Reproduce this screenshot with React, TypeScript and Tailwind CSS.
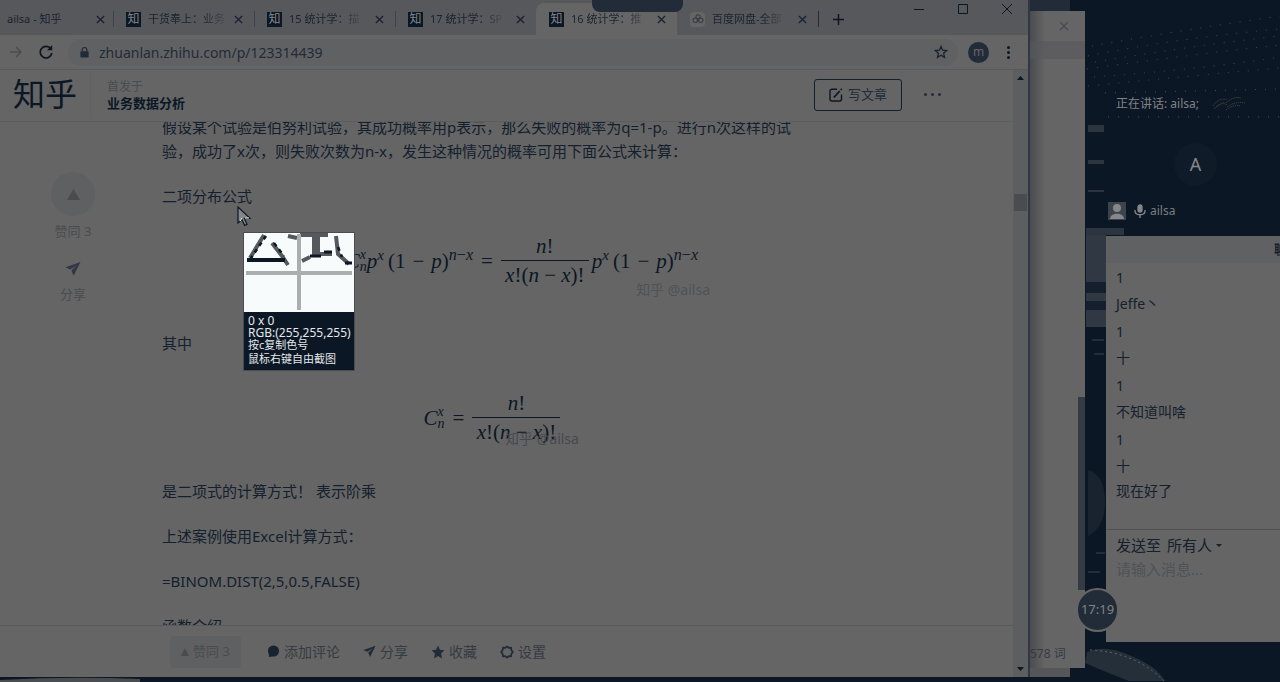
import React from "react";

const tabs = [
  { title: "干货奉上：业务", kind: "zhi", active: false },
  { title: "15 统计学：描", kind: "zhi", active: false },
  { title: "17 统计学：SP", kind: "zhi", active: false },
  { title: "16 统计学：推", kind: "zhi", active: true },
  { title: "百度网盘-全部", kind: "pan", active: false },
];

const messages = [
  ["1", "Jeffe丶"],
  ["1", "十"],
  ["1", "不知道叫啥"],
  ["1", "十"],
];

function Cross({ className }: { className: string }) {
  return (
    <svg viewBox="0 0 10 10" className={className} fill="none" stroke="currentColor" strokeWidth="1.5">
      <path d="M1 1l8 8M9 1l-8 8" />
    </svg>
  );
}

function Plane({ className }: { className: string }) {
  return (
    <svg viewBox="0 0 16 16" className={className} fill="currentColor">
      <path d="M15.5 1L.5 6.2l4.6 2.2L12 4.2 6.4 9.4l2.2 5.4z" />
    </svg>
  );
}

function Triangle({ className }: { className: string }) {
  return (
    <svg viewBox="0 0 12 10" preserveAspectRatio="none" className={className} fill="currentColor">
      <path d="M6 0l6 10H0z" />
    </svg>
  );
}

function Favicon({ kind }: { kind: string }) {
  if (kind === "zhi")
    return (
      <span className="flex h-[15px] w-[15px] shrink-0 items-center justify-center bg-[#0b1724] text-[12px] leading-none text-[#85878a]">
        知
      </span>
    );
  return (
    <span className="flex h-[15px] w-[15px] shrink-0 items-center justify-center rounded-sm bg-[#656565]">
      <svg viewBox="0 0 14 14" className="h-3 w-3" fill="none" stroke="#353b43" strokeWidth="1.3">
        <circle cx="7" cy="4.5" r="2.4" />
        <circle cx="3.8" cy="8.5" r="2.6" />
        <circle cx="10.2" cy="8.5" r="2.6" />
      </svg>
    </span>
  );
}

function TabStrip() {
  return (
    <div className="flex h-[35px] shrink-0 bg-[#57585b] text-[11px] text-[#18232f]">
      <div role="tablist" className="flex pt-[3px]">
        <div className="flex h-8 w-[113px] items-center pl-[7px] pr-2">
          <button role="tab" className="flex-1 whitespace-nowrap text-left">ailsa - 知乎</button>
          <button aria-label="关闭标签页" className="shrink-0"><Cross className="h-[9px] w-[9px]" /></button>
        </div>
        {tabs.map((t, i) => (
          <div
            key={i}
            className={
              "flex h-8 w-[141px] items-center " +
              (t.active ? "rounded-t-lg bg-[#656565]" : "")
            }
          >
            <span className={"h-4 w-px " + (i < 3 ? "bg-[#3c434b]" : "")} />
            <button role="tab" aria-selected={t.active} className="flex min-w-0 flex-1 items-center gap-[7px] pl-3">
              <Favicon kind={t.kind} />
              <span className="whitespace-nowrap bg-linear-to-r from-[#18232f] from-70% to-[#4a4c50] bg-clip-text text-left text-transparent">
                {t.title}
              </span>
            </button>
            <button aria-label="关闭标签页" className="shrink-0 pr-[11px]"><Cross className="h-[9px] w-[9px]" /></button>
          </div>
        ))}
      </div>
      <div className="flex items-center pt-[3px]">
        <span className="h-4 w-px bg-[#222c38]" />
        <button aria-label="新标签页" className="pl-[14px]">
          <svg viewBox="0 0 12 12" className="h-[11px] w-[11px]" stroke="#0b1724" strokeWidth="1.6"><path d="M6 0v12M0 6h12" /></svg>
        </button>
      </div>
      <div className="ml-auto flex h-[18px] items-center gap-[34px] pr-[16px] text-[#0b1724]">
        <button aria-label="最小化"><svg viewBox="0 0 10 10" className="h-[10px] w-[10px]" stroke="currentColor"><path d="M0 5.5h10" /></svg></button>
        <button aria-label="最大化"><svg viewBox="0 0 10 10" className="h-[10px] w-[10px]" fill="none" stroke="currentColor"><path d="M.5.5h9v9h-9z" /></svg></button>
        <button aria-label="关闭"><svg viewBox="0 0 10 10" className="h-[10px] w-[10px]" stroke="currentColor"><path d="M0 0l10 10M10 0L0 10" /></svg></button>
      </div>
    </div>
  );
}

function AddressBar() {
  return (
    <div className="flex h-[35px] shrink-0 items-center border-b border-[#58595c] pl-[10px] pr-[18px] text-[#0b1724]">
      <button aria-label="前进" className="text-[#4a4c50]">
        <svg viewBox="0 0 12 12" className="h-3 w-3" fill="none" stroke="currentColor" strokeWidth="1.5"><path d="M0 6h11M6 1l5 5-5 5" /></svg>
      </button>
      <button aria-label="重新加载" className="ml-[17px]">
        <svg viewBox="0 0 14 14" className="h-[14px] w-[14px]" fill="none" stroke="currentColor" strokeWidth="1.7">
          <path d="M11.8 3.8A5.8 5.8 0 1 0 12.8 8" /><path d="M13.2 0v5.2H8z" fill="currentColor" stroke="none" />
        </svg>
      </button>
      <div className="ml-[15px] flex h-[27px] flex-1 items-center rounded-full bg-[#606163] pl-3 pr-[10px]">
        <svg viewBox="0 0 9 12" className="h-[11px] w-[9px]" fill="#222c38"><path d="M2 5V3a2.5 2.5 0 0 1 5 0v2" fill="none" stroke="#222c38" strokeWidth="1.3" /><rect y="4.5" width="9" height="7" rx="1" /></svg>
        <input
          aria-label="地址"
          defaultValue="zhuanlan.zhihu.com/p/123314439"
          className="ml-[10px] min-w-0 flex-1 bg-transparent text-[14px] text-[#222c38] outline-none"
        />
        <button aria-label="收藏此页">
          <svg viewBox="0 0 24 24" className="h-[14px] w-[14px]" fill="none" stroke="#18232f" strokeWidth="2.2"><path d="M12 2.5l2.8 6.5 7 .6-5.3 4.6 1.6 6.9-6.1-3.7-6.1 3.7 1.6-6.9L2.2 9.6l7-.6z" /></svg>
        </button>
      </div>
      <button aria-label="用户" className="ml-[10px] h-[21px] w-[21px] rounded-full bg-[#222c38] text-[12px] leading-none text-[#656565]">m</button>
      <button aria-label="菜单" className="ml-[18px] flex flex-col gap-[2px]">
        <span className="h-[3px] w-[3px] rounded-full bg-[#0b1724]" />
        <span className="h-[3px] w-[3px] rounded-full bg-[#0b1724]" />
        <span className="h-[3px] w-[3px] rounded-full bg-[#0b1724]" />
      </button>
    </div>
  );
}

function SiteHeader() {
  return (
    <header className="flex h-[52px] shrink-0 items-center border-b border-[#5c5d5f] pb-[2px] pl-[13px] pr-[72px]">
      <a href="#home" aria-label="知乎" className="w-[78px] border-r border-[#606163] pb-[2px] text-[32px] leading-[44px] text-[#0b1724]">知乎</a>
      <div className="ml-4">
        <div className="text-[12px] leading-[17px] text-[#4a4c50]">首发于</div>
        <a href="#column" className="block text-[13px] font-bold leading-[17px] text-[#0b1724]">业务数据分析</a>
      </div>
      <button className="ml-auto flex h-8 w-[88px] items-center justify-center gap-[5px] rounded-[3px] border border-[#14202d] text-[13px] text-[#222c38]">
        <svg viewBox="0 0 14 14" className="h-[14px] w-[14px]" fill="none" stroke="#0b1724" strokeWidth="1.4">
          <path d="M8 1.2H3a2 2 0 0 0-2 2V11a2 2 0 0 0 2 2h7.500a2 2 0 0 0 2-2V6.500" /><path d="M4.800 9.500l6-6.500M11.800 1.800l1-1" strokeWidth="1.800" />
        </svg>
        写文章
      </button>
      <button aria-label="更多" className="ml-[22px] flex gap-1">
        <span className="h-[3px] w-[3px] rounded-full bg-[#222c38]" />
        <span className="h-[3px] w-[3px] rounded-full bg-[#222c38]" />
        <span className="h-[3px] w-[3px] rounded-full bg-[#222c38]" />
      </button>
    </header>
  );
}

function Fraction() {
  return (
    <span className="flex w-[88px] flex-col items-center text-[21px] leading-[28px]">
      <span><i>n</i>!</span>
      <span className="w-full border-t border-[#0b1724] text-center"><i>x</i>!(<i>n</i> − <i>x</i>)!</span>
    </span>
  );
}

function Power() {
  return (
    <>
      <i>p</i><sup className="top-[-8px] text-[15px] leading-none"><i>x</i></sup>
      <span className="pl-1">(1<span className="px-[7px]">−</span><i>p</i>)</span>
      <sup className="top-[-8px] text-[16px] leading-none"><i>n</i>−<i>x</i></sup>
    </>
  );
}

function Combination() {
  return (
    <span className="flex items-center">
      <i>C</i>
      <span className="flex flex-col text-[14px] leading-[12px]"><i>x</i><i>n</i></span>
    </span>
  );
}

const mathFont = "font-['Liberation_Serif',serif] text-[21px] leading-[28px] text-[#0b1724]";

function Article() {
  return (
    <article className="min-w-0 max-w-[660px] flex-1 text-[15px] leading-6 text-[#14202d]">
      <p className="-mt-[7px] pr-4">
        假设某个试验是伯努利试验，其成功概率用p表示，那么失败的概率为q=1-p。进行n次这样的试验，成功了x次，则失败次数为n-x，发生这种情况的概率可用下面公式来计算：
      </p>
      <p className="mt-[21px]">二项分布公式</p>
      <figure className={"mt-[21px] h-[81px] pr-[124px] " + mathFont}>
        <div className="flex items-center justify-end pt-[3px]">
          <Combination />
          <span><Power /></span>
          <span className="px-2">=</span>
          <Fraction />
          <span className="pl-[3px]"><Power /></span>
        </div>
        <figcaption className="-mr-[12px] -mt-[6px] text-right font-['Noto_Sans','Noto_Sans_CJK_SC',sans-serif] text-[14px] leading-none text-[#505255]">知乎 @ailsa</figcaption>
      </figure>
      <p className="mt-[21px]">其中</p>
      <figure className={"mt-[21px] h-[82px] pt-[13px] " + mathFont}>
        <div className="flex items-center justify-center">
          <Combination />
          <span className="px-2">=</span>
          <Fraction />
        </div>
        <figcaption className="-mt-[14px] pl-[100px] text-center font-['Noto_Sans','Noto_Sans_CJK_SC',sans-serif] text-[14px] leading-none text-[#47494d]">知乎 @ailsa</figcaption>
      </figure>
      <p className="mt-[21px]">是二项式的计算方式！ 表示阶乘</p>
      <p className="mt-[21px]">上述案例使用Excel计算方式：</p>
      <p className="mt-[21px]">=BINOM.DIST(2,5,0.5,FALSE)</p>
      <p className="mt-[21px]">函数介绍</p>
    </article>
  );
}

function ActionBar() {
  const item = "flex items-center gap-1 text-[14px] text-[#353b43]";
  return (
    <footer className="flex h-[52px] shrink-0 items-center border-t border-[#585a5c] pl-[170px] text-[#353b43]">
      <button className="flex h-8 w-[71px] items-center justify-center gap-1 rounded-sm bg-[#5f6062] text-[13px] text-[#4a4c50]">
        <Triangle className="h-2 w-2" />赞同 3
      </button>
      <button className={"ml-[26px] " + item}>
        <svg viewBox="0 0 14 14" className="h-[13px] w-[13px]" fill="#18232f"><circle cx="7" cy="6.500" r="6" /><path d="M2 9v4l4-1z" /></svg>
        添加评论
      </button>
      <button className={"ml-[23px] " + item}><Plane className="h-[13px] w-[13px] text-[#222c38]" />分享</button>
      <button className={"ml-[23px] " + item}>
        <svg viewBox="0 0 24 24" className="h-[14px] w-[14px]" fill="#222c38"><path d="M12 1l3.300 7.200 7.700 1-5.700 5.300L18.800 23 12 19l-6.800 4 1.500-8.500L1 9.200l7.700-1z" /></svg>
        收藏
      </button>
      <button className={"ml-[23px] " + item}>
        <svg viewBox="0 0 24 24" className="h-[14px] w-[14px]" fill="none" stroke="#222c38" strokeWidth="3"><path d="M12 2.500l3 2.300 4-.2.400 3.800 2.600 3.600-2.600 3.600-.4 3.800-4-.2-3 2.300-3-2.300-4 .2-.4-3.800L2 12l2.600-3.600L5 4.600l4 .2z" strokeLinejoin="round" /></svg>
        设置
      </button>
    </footer>
  );
}

function ScreenPicker() {
  return (
    <div className="absolute left-[243px] top-[232px] w-28 border border-[#4a4c50] bg-[#0b1724] text-[12px] text-[#e4e8ea]">
      <svg viewBox="0 0 110 79" className="block h-[79px] w-full bg-[#f7fbfc]">
        <g fill="none" stroke="#55585c" strokeWidth="4">
          <path d="M20 2L6 25M28 10l10 13l6 9M44 3l9 2M56 2h28M70 3v20M74 3v20M66 24l-8 4M76 21h12M92 3l2 18 11 10" />
        </g>
        <path d="M3 27h38" stroke="#0b1724" strokeWidth="4" />
        <path d="M66 23h11M80 19h8M101 30h7" stroke="#0b1724" strokeWidth="3" />
        <path d="M22 3L7 25M94 14l4 10M30 10l10 13" stroke="#0b1724" strokeWidth="2.500" strokeDasharray="4 4" />
        <path d="M2 40h106M55 1v76" stroke="#aaaead" strokeWidth="4" />
      </svg>
      <div className="px-1 pb-1 pt-[3px]">
        <div className="leading-[12px]">0 x 0</div>
        <div className="whitespace-nowrap leading-[11px]">RGB:(255,255,255)</div>
        <div className="whitespace-nowrap text-[11px] leading-[14px]">按c复制色号</div>
        <div className="whitespace-nowrap text-[11px] leading-[14px]">鼠标右键自由截图</div>
      </div>
    </div>
  );
}

function Pointer() {
  return (
    <svg viewBox="0 0 14 20" className="absolute left-[237px] top-[206px] h-5 w-[14px]">
      <path d="M1 1v16l4-3.600 2.600 6 2.400-1-2.600-6H13z" fill="#85878a" stroke="#0b1724" strokeWidth="1.200" />
      <path d="M3 15l2-3M8 12h4" stroke="#f7fbfc" />
    </svg>
  );
}

function Browser() {
  return (
    <section className="flex min-w-0 flex-1 flex-col border-r-2 border-[#303943] bg-[#656565]">
      <TabStrip />
      <AddressBar />
      <div className="flex min-h-0 flex-1">
        <div className="flex min-w-0 flex-1 flex-col">
          <SiteHeader />
          <div className="flex min-h-0 flex-1 overflow-hidden">
            <aside className="flex w-[162px] shrink-0 flex-col items-center pr-4 pt-[50px] text-[13px] text-[#4a4c50]">
              <button className="flex flex-col items-center leading-5">
                <span className="flex h-11 w-11 items-center justify-center rounded-full bg-[#5f6062]">
                  <Triangle className="h-[11px] w-[13px]" />
                </span>
                <span className="mt-[5px]">赞同 3</span>
              </button>
              <button className="mt-5 flex flex-col items-center leading-5">
                <Plane className="h-4 w-4 text-[#303943]" />
                <span className="mt-[7px]">分享</span>
              </button>
            </aside>
            <Article />
          </div>
          <ActionBar />
        </div>
        <div className="flex w-[15px] shrink-0 flex-col items-center justify-between bg-[#5d5e60] py-[6px] text-[#0b1724]">
          <Triangle className="h-1 w-[7px]" />
          <div className="-mt-[343px] h-[17px] w-[13px] bg-[#4a4c50]" />
          <Triangle className="h-1 w-[7px] rotate-180" />
        </div>
      </div>
    </section>
  );
}

function BackWindow() {
  return (
    <section className="flex w-[55px] shrink-0 flex-col">
      <div className="h-[11px] w-10 bg-[#222c38]" />
      <div className="flex flex-1 flex-col bg-[#656565] bg-linear-to-r from-[#4a4c50] to-[#656565] to-28%">
        <div className="flex h-[30px] items-center justify-end pr-4 text-[#4a4c50]">
          <button aria-label="关闭文档"><Cross className="h-[10px] w-[10px]" /></button>
        </div>
        <div className="h-[18px] bg-[#58595c]/60" />
        <div className="h-[338px]" />
        <div className="ml-auto h-[193px] w-[7px] bg-[#353b43]" />
        <div className="mt-auto pb-[5px] text-[12px] leading-[18px] text-[#353b43]">578 词</div>
      </div>
      <div className="h-[9px] w-10 bg-[#54565a]" />
    </section>
  );
}

function Meeting() {
  return (
    <section className="flex w-[174px] shrink-0 flex-col pb-10">
      <div className="flex h-[236px] flex-col">
        <div className="mt-[90px] flex h-7 items-center pl-[10px] text-[12px] text-[#808285]">
          正在讲话: ailsa;
          <svg viewBox="0 0 36 18" className="ml-3 h-[18px] w-9" stroke="#4a4c50" fill="none" strokeDasharray="1 1">
            <path d="M2 11q6-9 14-6M3 14q8-8 13-4M5 12q5-4 9-5M15 8q7-7 15-5M16 12q8-6 18-4M15 15q8-6 14-4" />
          </svg>
        </div>
        <div className="ml-[68px] mt-[25px] flex h-[43px] w-[43px] items-center justify-center rounded-full bg-[#0f1b28] text-[18px] text-[#85878a]">A</div>
        <div className="mt-4 flex items-center pl-[2px] text-[12px] leading-[18px] text-[#7a7c7f]">
          <svg viewBox="0 0 18 18" className="h-[18px] w-[18px]">
            <path d="M0 0h18v18H0z" fill="#3c434b" />
            <circle cx="9" cy="6" r="4" fill="#85878a" /><path d="M2 17c0-7 14-7 14 0z" fill="#85878a" />
          </svg>
          <svg viewBox="0 0 12 14" className="ml-2 mr-1 h-[14px] w-3" fill="none" stroke="#85878a" strokeWidth="1.300">
            <rect x="4" y="1" width="4" height="7" rx="2" fill="#85878a" /><path d="M1 6v1c0 5 10 5 10 0V6M6 11v3" />
          </svg>
          ailsa
        </div>
      </div>
      <div className="flex flex-1 flex-col bg-[#656565] text-[14px] text-[#14202d]">
        <div className="h-[27px] overflow-hidden whitespace-nowrap bg-[#606163] pl-[168px] text-[13px] font-bold leading-[27px]">聊天</div>
        <div className="pl-[10px] pt-[2px]">
          {messages.map(([num, text], i) => (
            <div key={i} className="h-[54px] leading-[26px]">
              <div>{num}</div>
              <div>{text}</div>
            </div>
          ))}
          <div className="leading-5">现在好了</div>
        </div>
        <form className="mt-auto h-[113px] border-t border-[#505255] px-[10px] pt-1">
          <div className="flex items-center text-[15px] leading-[22px]">
            <label htmlFor="to">发送至</label>
            <select id="to" className="ml-[6px] w-[47px] appearance-none bg-transparent outline-none"><option>所有人</option></select>
            <Triangle className="ml-[2px] h-[3px] w-[6px] rotate-180" />
          </div>
          <input aria-label="消息" placeholder="请输入消息..." className="w-full bg-transparent text-[15px] leading-[26px] outline-none placeholder:text-[#505255]" />
        </form>
      </div>
    </section>
  );
}

function Wallpaper() {
  return (
    <svg viewBox="0 0 1280 682" preserveAspectRatio="none" className="absolute inset-0 h-full w-full">
      <g fill="none" stroke="#4a4c50" strokeDasharray="1 9">
        <path d="M1092 46q90-16 188-30M1088 56q90-18 192-27M1095 62q110-18 185-26M1087 69q100-14 193-24M1094 77q110-8 186-20M1088 86q100-10 192-18M1105 93l175-4M1108 117h172" />
      </g>
      <path d="M1086 235h20v92h-20z" fill="#303943" />
      <path d="M1086 282h20v11h-20zM1086 301h20v9h-20z" fill="#14202d" />
      <path d="M1088 125h16v7h-16zM1088 160h16v4h-16zM1088 190h16v2h-16zM1086 228h38v7h-38z" fill="#2b343f" />
      <path d="M1088 470q16 4 17 30t-17 36z" fill="#18232f" />
      <path d="M1096 553h9M1088 572h12M1094 354h10M1092 340h12" stroke="#3c434b" />
      <path d="M1087 652q18-8 42 3 28 11 36 26h-36q-26-10-44-18z" fill="#252f3a" />
      <path d="M1090 650q46 2 75 32" fill="none" stroke="#656565" strokeDasharray="2 3" />
      <path d="M0 680q70-4 140-1v3H0z" fill="#4a4c50" />
    </svg>
  );
}

export default function App() {
  return (
    <main className="relative flex h-screen overflow-hidden bg-[#0b1724] font-['Noto_Sans','Noto_Sans_CJK_SC',sans-serif]">
      <Wallpaper />
      <div className="relative flex min-w-0 flex-1 pb-[5px]">
        <Browser />
        <BackWindow />
      </div>
      <div className="relative ml-[21px] flex">
        <Meeting />
        <div className="absolute -left-[30px] top-[588px] flex h-11 w-[43px] items-center justify-center rounded-full border-2 border-[#656565] bg-[#222c38] text-[13px] text-[#808285]">17:19</div>
      </div>
      <div className="absolute left-[592px] top-0 h-3 w-[91px] rounded-b-lg bg-[#222c38]" />
      <Pointer />
      <ScreenPicker />
    </main>
  );
}
